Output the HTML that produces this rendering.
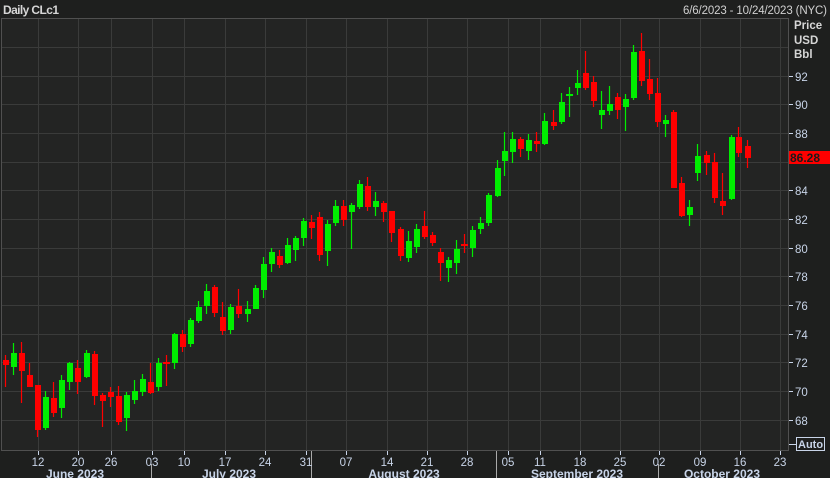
<!DOCTYPE html>
<html><head><meta charset="utf-8"><style>
html,body{margin:0;padding:0;background:#1e1f1e;width:830px;height:478px;overflow:hidden}
svg{display:block}
text{font-family:"Liberation Sans",sans-serif}
</style></head><body>
<svg width="830" height="478" viewBox="0 0 830 478" xmlns="http://www.w3.org/2000/svg">
<rect x="0" y="0" width="830" height="478" fill="#1e1f1e"/>
<text x="3" y="14" font-size="12" font-weight="bold" fill="#d6d6d6" textLength="56">Daily CLc1</text>
<text x="827" y="14" font-size="11.5" fill="#d0d0d0" text-anchor="end" textLength="144">6/6/2023 - 10/24/2023 (NYC)</text>
<rect x="1.5" y="18.5" width="787" height="432" fill="#232423" stroke="#505050"/>
<g stroke="#3a3b3a" stroke-width="1">
<path d="M2 47.5H788M2 76.5H788M2 104.5H788M2 133.5H788M2 162.5H788M2 190.5H788M2 219.5H788M2 248.5H788M2 276.5H788M2 305.5H788M2 334.5H788M2 362.5H788M2 391.5H788M2 420.5H788"/>
<path d="M38.5 19V450M78.5 19V450M111.5 19V450M152.5 19V450M184.5 19V450M225.5 19V450M265.5 19V450M306.5 19V450M346.5 19V450M387.5 19V450M427.5 19V450M467.5 19V450M508.5 19V450M540.5 19V450M580.5 19V450M620.5 19V450M659.5 19V450M700.5 19V450M740.5 19V450M780.5 19V450"/>
</g>
<g stroke="#ff0000" stroke-width="1.2">
<path d="M5.5 355V387M21.5 342V403M29.5 363V387M37.5 385V437M53.5 382V417M77.5 360V394M94.5 351V405M102.5 393V427M110.5 387V407M118.5 386V425M150.5 363V394M166.5 355V386M182.5 330V352M214.5 285V317M222.5 302V335M238.5 289V318M279.5 250V268M311.5 215V239M319.5 212V261M343.5 200V226M367.5 177V211M383.5 201V222M391.5 211V242M400.5 227V261M424.5 211V239M432.5 232V246M440.5 248V281M464.5 234V253M520.5 137V157M536.5 132V152M553.5 110V130M585.5 51V90M593.5 76V107M617.5 93V119M641.5 33V86M649.5 59V100M657.5 78V127M673.5 110V188M681.5 177V217M706.5 151V175M714.5 153V203M722.5 173V215M738.5 127V157M747.5 140V168"/>
</g>
<g stroke="#00ee00" stroke-width="1.2">
<path d="M13.5 343V375M45.5 391V430M61.5 375V418M69.5 362V390M86.5 350V378M126.5 392V431M134.5 380V404M142.5 374V396M158.5 358V391M174.5 333V369M190.5 318V347M198.5 301V323M206.5 284V314M230.5 304V334M247.5 301V322M255.5 285V309M263.5 257V298M271.5 248V272M287.5 238V264M295.5 236V261M303.5 218V246M327.5 220V266M335.5 200V226M351.5 203V249M359.5 180V209M375.5 192V216M408.5 231V262M416.5 224V253M448.5 257V282M456.5 240V274M472.5 226V257M480.5 217V234M488.5 193V226M497.5 160V197M504.5 132V176M512.5 132V163M528.5 134V160M544.5 113V145M561.5 93V124M569.5 87V117M577.5 70V95M601.5 91V129M609.5 86V115M625.5 94V131M633.5 45V100M665.5 115V137M689.5 200V226M697.5 144V181M731.5 135V200"/>
</g>
<g fill="#ff0000">
<rect x="3" y="360" width="6" height="5"/><rect x="19" y="353" width="6" height="18"/><rect x="27" y="375" width="6" height="12"/><rect x="35" y="385" width="6" height="45"/><rect x="51" y="398" width="6" height="15"/><rect x="75" y="368" width="6" height="14"/><rect x="92" y="354" width="6" height="42"/><rect x="100" y="395" width="6" height="6"/><rect x="108" y="392" width="6" height="5"/><rect x="116" y="396" width="6" height="26"/><rect x="148" y="382" width="6" height="11"/><rect x="163" y="362" width="7" height="2"/><rect x="180" y="334" width="6" height="13"/><rect x="212" y="287" width="6" height="26"/><rect x="220" y="317" width="6" height="14"/><rect x="236" y="306" width="6" height="8"/><rect x="277" y="256" width="6" height="9"/><rect x="309" y="222" width="6" height="6"/><rect x="317" y="217" width="6" height="38"/><rect x="341" y="206" width="6" height="14"/><rect x="365" y="186" width="6" height="21"/><rect x="381" y="203" width="6" height="9"/><rect x="389" y="211" width="6" height="22"/><rect x="398" y="229" width="6" height="27"/><rect x="422" y="226" width="6" height="11"/><rect x="430" y="235" width="6" height="8"/><rect x="438" y="252" width="6" height="11"/><rect x="461" y="244" width="7" height="2"/><rect x="518" y="139" width="6" height="10"/><rect x="534" y="141" width="6" height="3"/><rect x="551" y="122" width="6" height="4"/><rect x="583" y="73" width="6" height="15"/><rect x="591" y="82" width="6" height="19"/><rect x="615" y="97" width="6" height="13"/><rect x="639" y="51" width="6" height="30"/><rect x="647" y="79" width="6" height="15"/><rect x="655" y="93" width="6" height="29"/><rect x="671" y="112" width="6" height="76"/><rect x="679" y="183" width="6" height="33"/><rect x="704" y="155" width="6" height="8"/><rect x="712" y="162" width="6" height="36"/><rect x="720" y="201" width="6" height="5"/><rect x="736" y="137" width="6" height="16"/><rect x="745" y="146" width="6" height="12"/>
</g>
<g fill="#00ee00">
<rect x="11" y="353" width="6" height="14"/><rect x="43" y="397" width="6" height="31"/><rect x="59" y="380" width="6" height="28"/><rect x="67" y="363" width="6" height="19"/><rect x="84" y="353" width="6" height="24"/><rect x="124" y="395" width="6" height="23"/><rect x="132" y="391" width="6" height="9"/><rect x="140" y="379" width="6" height="13"/><rect x="156" y="363" width="6" height="24"/><rect x="172" y="334" width="6" height="29"/><rect x="188" y="320" width="6" height="24"/><rect x="196" y="307" width="6" height="14"/><rect x="204" y="291" width="6" height="15"/><rect x="228" y="307" width="6" height="23"/><rect x="245" y="309" width="6" height="5"/><rect x="253" y="288" width="6" height="21"/><rect x="261" y="264" width="6" height="26"/><rect x="269" y="252" width="6" height="12"/><rect x="285" y="245" width="6" height="18"/><rect x="293" y="238" width="6" height="12"/><rect x="301" y="221" width="6" height="17"/><rect x="325" y="224" width="6" height="27"/><rect x="333" y="206" width="6" height="17"/><rect x="349" y="205" width="6" height="7"/><rect x="357" y="184" width="6" height="23"/><rect x="373" y="201" width="6" height="6"/><rect x="406" y="241" width="6" height="17"/><rect x="414" y="229" width="6" height="18"/><rect x="446" y="260" width="6" height="8"/><rect x="454" y="249" width="6" height="14"/><rect x="470" y="230" width="6" height="18"/><rect x="478" y="223" width="6" height="6"/><rect x="486" y="195" width="6" height="28"/><rect x="495" y="168" width="6" height="28"/><rect x="502" y="151" width="6" height="10"/><rect x="510" y="139" width="6" height="13"/><rect x="526" y="140" width="6" height="11"/><rect x="542" y="121" width="6" height="23"/><rect x="559" y="102" width="6" height="20"/><rect x="566" y="94" width="7" height="2"/><rect x="575" y="83" width="6" height="5"/><rect x="599" y="110" width="6" height="5"/><rect x="607" y="104" width="6" height="7"/><rect x="623" y="99" width="6" height="8"/><rect x="631" y="52" width="6" height="46"/><rect x="663" y="120" width="6" height="4"/><rect x="687" y="207" width="6" height="8"/><rect x="695" y="156" width="6" height="17"/><rect x="729" y="137" width="6" height="62"/>
</g>
<g font-size="11.5" font-weight="bold" fill="#d6d6d6">
<text x="794" y="29">Price</text><text x="794" y="44">USD</text><text x="794" y="58">Bbl</text>
</g>
<g stroke="#c8d4e8" stroke-width="1"><path d="M789 76.5h4M789 104.5h4M789 133.5h4M789 162.5h4M789 190.5h4M789 219.5h4M789 248.5h4M789 276.5h4M789 305.5h4M789 334.5h4M789 362.5h4M789 391.5h4M789 420.5h4M789 444.5h7"/></g>
<g font-size="11.5" fill="#c8d4e8">
<text x="795" y="81">92</text><text x="795" y="109">90</text><text x="795" y="138">88</text><text x="795" y="195">84</text><text x="795" y="224">82</text><text x="795" y="253">80</text><text x="795" y="281">78</text><text x="795" y="310">76</text><text x="795" y="339">74</text><text x="795" y="367">72</text><text x="795" y="396">70</text><text x="795" y="425">68</text>
</g>
<rect x="789" y="151" width="41" height="13" fill="#ff0000"/>
<text x="790" y="162" font-size="12" font-weight="bold" fill="#1a1a1a">86.28</text>
<rect x="796.5" y="437.5" width="28" height="13" fill="#1e1f1e" stroke="#c8d4e8"/>
<text x="798" y="448" font-size="11" font-weight="bold" fill="#c8d4e8">Auto</text>
<g stroke="#c8d4e8"><path d="M38.5 451v4M78.5 451v4M111.5 451v4M152.5 451v4M184.5 451v4M225.5 451v4M265.5 451v4M306.5 451v4M346.5 451v4M387.5 451v4M427.5 451v4M467.5 451v4M508.5 451v4M540.5 451v4M580.5 451v4M620.5 451v4M659.5 451v4M700.5 451v4M740.5 451v4M780.5 451v4"/>
<path d="M151.5 464V478M311.5 451V478M496.5 451V478M658.5 464V478" stroke="#aaaaaa"/></g>
<g font-size="11.5" fill="#c8d4e8" text-anchor="middle">
<text x="38" y="466">12</text><text x="78" y="466">20</text><text x="111" y="466">26</text><text x="152" y="466">03</text><text x="184" y="466">10</text><text x="225" y="466">17</text><text x="265" y="466">24</text><text x="306" y="466">31</text><text x="346" y="466">07</text><text x="387" y="466">14</text><text x="427" y="466">21</text><text x="467" y="466">28</text><text x="508" y="466">05</text><text x="540" y="466">11</text><text x="580" y="466">18</text><text x="620" y="466">25</text><text x="659" y="466">02</text><text x="700" y="466">09</text><text x="740" y="466">16</text><text x="780" y="466">23</text>
</g>
<g font-size="12" font-weight="bold" fill="#c8d4e8" text-anchor="middle">
<text x="75" y="478">June 2023</text><text x="229" y="478">July 2023</text><text x="404" y="478">August 2023</text><text x="577" y="478">September 2023</text><text x="722" y="478">October 2023</text>
</g>
</svg>
</body></html>
